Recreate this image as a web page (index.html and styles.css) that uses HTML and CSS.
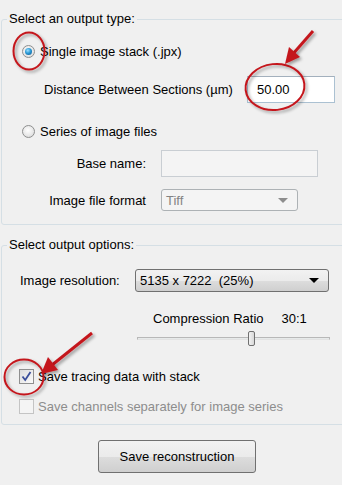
FILE: index.html
```html
<!DOCTYPE html>
<html lang="en">
<head>
    <meta charset="UTF-8">
    <title>Save reconstruction</title>
    <link rel="stylesheet" href="styles.css">
</head>
<body>
    <div class="panel">
        <fieldset class="group group-type">
            <legend>Select an output type:</legend>

            <div class="row row-radio1">
                <span class="radio checked"></span>
                <span>Single image stack (.jpx)</span>
            </div>

            <div class="row row-distance">
                <span class="lbl-distance">Distance Between Sections (µm)</span>
                <span class="textbox textbox-distance">50.00</span>
            </div>

            <div class="row row-radio2">
                <span class="radio"></span>
                <span>Series of image files</span>
            </div>

            <div class="row row-base">
                <span class="lbl-right">Base name:</span>
                <span class="textbox textbox-disabled"></span>
            </div>

            <div class="row row-format">
                <span class="lbl-right">Image file format</span>
                <span class="combo combo-disabled">
                    <span>Tiff</span>
                    <span class="caret"></span>
                </span>
            </div>
        </fieldset>

        <fieldset class="group group-options">
            <legend>Select output options:</legend>

            <div class="row row-resolution">
                <span class="lbl-resolution">Image resolution:</span>
                <span class="combo combo-resolution">
                    <span>5135 x 7222&nbsp;&nbsp;(25%)</span>
                    <span class="caret"></span>
                </span>
            </div>

            <div class="row row-ratio">
                <span>Compression Ratio</span>
                <span class="ratio-value">30:1</span>
            </div>

            <div class="row row-slider">
                <div class="slider">
                    <div class="track"></div>
                    <div class="thumb" style="left: 111px;"></div>
                </div>
            </div>

            <div class="row row-check1">
                <span class="checkbox checked">
                    <svg width="13" height="13" viewBox="0 0 13 13"><path d="M2.5 6.5 L5.2 10 L10.5 2" fill="none" stroke="#3b4f9a" stroke-width="1.8"/></svg>
                </span>
                <span>Save tracing data with stack</span>
            </div>

            <div class="row row-check2">
                <span class="checkbox disabled"></span>
                <span class="text-disabled">Save channels separately for image series</span>
            </div>
        </fieldset>

        <div class="actions">
            <button class="btn">Save reconstruction</button>
        </div>

        <!-- annotation marks drawn over the dialog -->
        <svg class="marks" width="342" height="485" viewBox="0 0 342 485">
            <defs>
                <filter id="shade" x="-20%" y="-20%" width="150%" height="150%">
                    <feDropShadow dx="2" dy="2" stdDeviation="1.5" flood-color="#000" flood-opacity="0.35"/>
                </filter>
            </defs>
            <g filter="url(#shade)" fill="none" stroke="#c4161c" stroke-width="2">
                <ellipse cx="29" cy="51" rx="15.5" ry="18.5"/>
                <ellipse cx="275" cy="87" rx="29.5" ry="23" transform="rotate(-6 275 87)"/>
                <ellipse cx="24" cy="377" rx="19.5" ry="17.5"/>
                <line x1="313" y1="31" x2="292" y2="55" stroke-width="3"/>
                <line x1="92" y1="333" x2="52" y2="365" stroke-width="3"/>
            </g>
            <g filter="url(#shade)" fill="#c4161c">
                <polygon points="285,64 300,57 289,47"/>
                <polygon points="41,374 58,370 48,357"/>
            </g>
        </svg>
    </div>
</body>
</html>
```

FILE: styles.css
```css
* {
    box-sizing: border-box;
}

body {
    margin: 0;
    background-color: #f0f0f0;
    font-family: 'Liberation Sans', Arial, sans-serif;
    font-size: 13px;
    color: #000;
}

.panel {
    position: relative;
    width: 342px;
    height: 485px;
    overflow: hidden;
}

.group {
    margin: 0 -12px 0 1px;
    padding: 0 0 0 20px;
    border: 1px solid #d5dfe5;
    border-radius: 3px;
    min-width: 0;
}

.group legend {
    margin-left: -15px;
    padding: 0 2px;
    height: 16px;
    line-height: 16px;
}

.group-type {
    margin-top: 11px;
    padding-bottom: 13px;
}

.group-options {
    margin-top: 12px;
    padding-bottom: 9px;
    padding-left: 17px;
}

.group-options legend {
    margin-left: -12px;
}

.row {
    display: flex;
    align-items: center;
}

.row-radio1 { height: 24px; margin-top: 12px; }
.row-distance { height: 27px; margin-top: 13px; padding-left: 22px; }
.row-radio2 { height: 24px; margin-top: 16px; }
.row-base { height: 27px; margin-top: 7px; }
.row-format { height: 22px; margin-top: 12px; }

.radio {
    width: 13px;
    height: 13px;
    border-radius: 50%;
    border: 1px solid #8e8f8f;
    background: radial-gradient(circle at 45% 40%, #ffffff 0%, #e6e6e6 60%, #cfcfcf 100%);
    margin-right: 5px;
    display: flex;
    align-items: center;
    justify-content: center;
}

.radio.checked::after {
    content: "";
    width: 7px;
    height: 7px;
    border-radius: 50%;
    background: radial-gradient(circle at 40% 35%, #9fe0ff 0%, #2a9ad6 45%, #0b4f86 100%);
}

.lbl-distance {
    width: 203px;
}

.textbox {
    height: 27px;
    background-color: #fff;
    border: 1px solid #abc1d2;
    border-top-color: #a3b0bd;
    display: flex;
    align-items: center;
    padding-left: 9px;
}

.textbox-distance {
    width: 88px;
}

.textbox-disabled {
    width: 157px;
    background-color: #f4f4f4;
    border-color: #c9ced3;
}

.lbl-right {
    width: 124px;
    text-align: right;
    margin-right: 15px;
}

.combo {
    height: 22px;
    display: flex;
    align-items: center;
    justify-content: space-between;
    padding: 0 9px 0 4px;
    border: 1px solid #707070;
    border-radius: 3px;
    background: linear-gradient(#f2f2f2, #ebebeb 50%, #dddddd 51%, #cfcfcf);
}

.combo-disabled {
    width: 137px;
    color: #838383;
    border-color: #adb2b5;
    background: #f4f4f4;
}

.caret {
    width: 0;
    height: 0;
    border-left: 5px solid transparent;
    border-right: 5px solid transparent;
    border-top: 5px solid #000;
}

.combo-disabled .caret {
    border-top-color: #8d8d8d;
}

.row-resolution { height: 23px; margin-top: 16px; }
.row-ratio { height: 16px; margin-top: 18px; padding-left: 134px; }
.row-slider { height: 15px; margin-top: 5px; padding-left: 118px; }
.row-check1 { height: 18px; margin-top: 21px; }
.row-check2 { height: 18px; margin-top: 12px; }

.lbl-resolution {
    width: 116px;
    padding-left: 1px;
}

.combo-resolution {
    width: 194px;
    height: 23px;
}

.ratio-value {
    margin-left: 18px;
}

.slider {
    position: relative;
    width: 193px;
    height: 15px;
}

.track {
    margin-top: 6px;
    height: 3px;
    border: 1px solid #b8b8b8;
    border-bottom-color: #e3e3e3;
    background-color: #e7eaea;
}

.thumb {
    position: absolute;
    top: 0;
    width: 7px;
    height: 15px;
    border: 1px solid #707070;
    border-radius: 2px;
    background: linear-gradient(to right, #f2f2f2, #d8d8d8);
}

.checkbox {
    width: 15px;
    height: 15px;
    border: 1px solid #8f8f8f;
    background: linear-gradient(135deg, #dcdcdc, #fbfbfb);
    margin-right: 4px;
    display: flex;
    align-items: center;
    justify-content: center;
}

.checkbox.disabled {
    border-color: #c4c4c4;
    background: #f4f4f4;
}

.text-disabled {
    color: #8d8d8d;
}

.actions {
    margin-top: 15px;
    padding-left: 98px;
}

.btn {
    width: 158px;
    height: 33px;
    font-family: 'Liberation Sans', Arial, sans-serif;
    font-size: 13px;
    color: #000;
    border: 1px solid #707070;
    border-radius: 3px;
    background: linear-gradient(#f2f2f2, #ebebeb 50%, #dddddd 51%, #cfcfcf);
}

.marks {
    position: absolute;
    top: 0;
    left: 0;
    pointer-events: none;
}
```
